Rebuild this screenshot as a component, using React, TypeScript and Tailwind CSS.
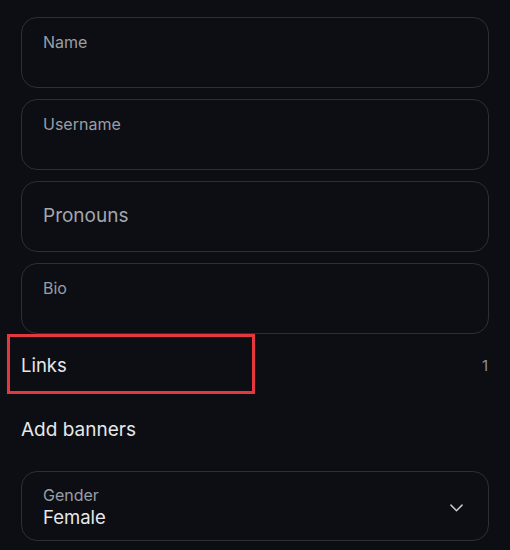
import React from "react";

function Field({ label, big }: { label: string; big?: boolean }) {
  return (
    <div
      className={
        "h-[71px] rounded-[16px] border border-[#2c2f35] px-[21px] " +
        (big ? "flex items-center" : "pt-[12px]")
      }
    >
      <span
        className={
          big
            ? "text-[19px] text-[#a3a7ae]"
            : "text-[16px] leading-[20px] text-[#9a9ea6]"
        }
      >
        {label}
      </span>
    </div>
  );
}

export default function App() {
  return (
    <div
      className="w-[510px] h-[550px] bg-[#0c0e13] overflow-hidden"
      style={{ fontFamily: "Inter, 'Noto Sans', sans-serif" }}
    >
      <div className="px-[21px] pt-[17px] flex flex-col">
        <div className="flex flex-col gap-[11px] w-[468px]">
          <Field label="Name" />
          <Field label="Username" />
          <Field label="Pronouns" big />
          <Field label="Bio" />
        </div>
        <div className="relative h-[62px] pt-[4px] flex items-center justify-between pr-[21px] w-[468px] mt-[-1px]">
          <span className="text-[18.5px] text-[#e6e7ea]">Links</span>
          <span className="text-[15px] text-[#8d9198] mr-[-20px]">1</span>
          <div className="absolute left-[-14px] top-[1px] w-[248px] h-[60px] border-[3px] border-[#e5383c]" />
        </div>
        <div className="h-[66px] pt-[4px] flex items-center">
          <span className="text-[19px] text-[#e6e7ea]">Add banners</span>
        </div>
        <div className="mt-[10px] h-[70px] w-[468px] rounded-[16px] border border-[#2c2f35] px-[21px] flex items-center justify-between">
          <div className="flex flex-col pt-[3px]">
            <span className="text-[16px] leading-[19px] text-[#9a9ea6]">Gender</span>
            <span className="text-[18.5px] leading-[24px] text-[#e8e9ec]">Female</span>
          </div>
          <svg width="19" height="19" viewBox="0 0 24 24" fill="none" stroke="#c9ccd1" strokeWidth="1.8" strokeLinecap="round" strokeLinejoin="round" className="mr-[1px] mt-[2px]">
            <path d="M5 9l7 7 7-7" />
          </svg>
        </div>
      </div>
    </div>
  );
}
